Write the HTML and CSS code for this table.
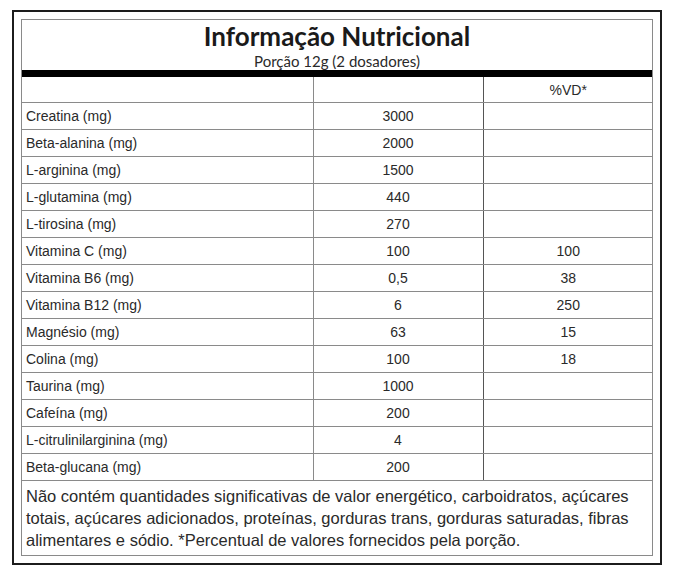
FILE: index.html
```html
<!DOCTYPE html>
<html lang="pt">
<head>
<meta charset="utf-8">
<link rel="stylesheet" href="styles.css">
</head>
<body>
<div class="frame">
  <div class="inner">
    <div class="head">
      <div class="title">Informação Nutricional</div>
      <div class="sub">Porção 12g (2 dosadores)</div>
    </div>
    <table class="nt">
      <colgroup><col class="c1"><col class="c2"><col class="c3"></colgroup>
      <tr class="hrow"><td></td><td></td><td>%VD*</td></tr>
      <tr><td>Creatina (mg)</td><td>3000</td><td></td></tr>
      <tr><td>Beta-alanina (mg)</td><td>2000</td><td></td></tr>
      <tr><td>L-arginina (mg)</td><td>1500</td><td></td></tr>
      <tr><td>L-glutamina (mg)</td><td>440</td><td></td></tr>
      <tr><td>L-tirosina (mg)</td><td>270</td><td></td></tr>
      <tr><td>Vitamina C (mg)</td><td>100</td><td>100</td></tr>
      <tr><td>Vitamina B6 (mg)</td><td>0,5</td><td>38</td></tr>
      <tr><td>Vitamina B12 (mg)</td><td>6</td><td>250</td></tr>
      <tr><td>Magnésio (mg)</td><td>63</td><td>15</td></tr>
      <tr><td>Colina (mg)</td><td>100</td><td>18</td></tr>
      <tr><td>Taurina (mg)</td><td>1000</td><td></td></tr>
      <tr><td>Cafeína (mg)</td><td>200</td><td></td></tr>
      <tr><td>L-citrulinilarginina (mg)</td><td>4</td><td></td></tr>
      <tr><td>Beta-glucana (mg)</td><td>200</td><td></td></tr>
      <tr class="foot"><td colspan="3">Não contém quantidades significativas de valor energético, carboidratos, açúcares totais, açúcares adicionados, proteínas, gorduras trans, gorduras saturadas, fibras alimentares e sódio. *Percentual de valores fornecidos pela porção.</td></tr>
    </table>
  </div>
</div>
</body>
</html>
```

FILE: styles.css
```css
html, body { margin: 0; padding: 0; background: #fff; }
body { font-family: "Liberation Sans", Arial, sans-serif; color: #2a2a2a; }

.frame {
  margin: 10px 0 0 12px;
  width: 632px;
  border: 2px solid #1c1c1c;
  padding: 7px;
}
.inner {
  border: 1px solid #8a8a8a;
}
.head {
  height: 50px;
  border-bottom: 7px solid #000;
  text-align: center;
}
.title {
  font-family: Lato, "Open Sans", sans-serif;
  font-weight: 700;
  font-size: 26px;
  line-height: 31px;
  padding-top: 1px;
  color: #1a1a1a;
}
.sub {
  font-family: Lato, "Open Sans", sans-serif;
  font-size: 15px;
  line-height: 18px;
  color: #2a2a2a;
}

.nt {
  width: 100%;
  border-collapse: collapse;
  table-layout: fixed;
  font-size: 14px;
}
.c1 { width: 291px; }
.c2 { width: 170px; }
.c3 { width: 170px; }
.nt td {
  height: 26px;
  padding: 0 4px;
  border: 1px solid #8a8a8a;
  text-align: center;
  vertical-align: middle;
  line-height: 16px;
}
.nt tr:first-child td { border-top: none; height: 25px; }
.nt td:first-child { text-align: left; border-left: none; }
.nt td:last-child { border-right: none; }
.nt td:nth-child(2) { border-left-color: #555; border-right-color: #555; }
.nt .foot td {
  text-align: left;
  font-size: 16.5px;
  line-height: 22px;
  padding: 4px 4px 4px 4px;
  border-bottom: none;
  height: auto;
}
```
